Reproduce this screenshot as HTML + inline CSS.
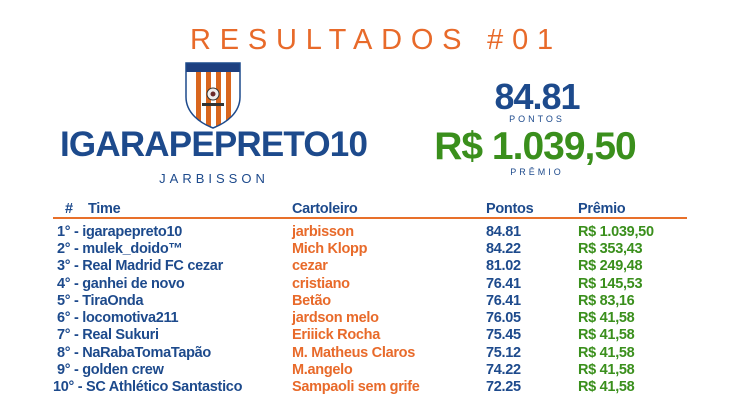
<!DOCTYPE html>
<html><head><meta charset="utf-8"><style>
body{margin:0;width:740px;height:420px;background:#fff;position:relative;overflow:hidden;font-family:"Liberation Sans",sans-serif}
.a{position:absolute;white-space:nowrap}
.b{color:#1d4a8c}.o{color:#e86a2a}.g{color:#3a8f1c}
.row{position:absolute;left:0;width:740px;height:17px;font-weight:bold;font-size:14.5px;letter-spacing:-0.3px}
.row span{position:absolute;top:0}
</style></head><body>
<div class="a o" style="left:6px;width:740px;text-align:center;top:24px;font-size:29px;letter-spacing:8.8px">RESULTADOS #01</div>
<svg class="a" style="left:184px;top:61px" width="58" height="68" viewBox="0 0 58 68">
<defs><clipPath id="c"><path d="M2 2H56V36C56 52 42 62 29 67C16 62 2 52 2 36Z"/></clipPath></defs>
<g clip-path="url(#c)"><rect width="58" height="68" fill="#fff"/>
<rect x="12" y="10" width="5" height="60" fill="#d9661e"/><rect x="22" y="10" width="5" height="60" fill="#d9661e"/><rect x="32" y="10" width="5" height="60" fill="#d9661e"/><rect x="42" y="10" width="5" height="60" fill="#d9661e"/>
<rect width="58" height="11" fill="#1d3f7f"/></g>
<path d="M2 2H56V36C56 52 42 62 29 67C16 62 2 52 2 36Z" fill="none" stroke="#1d4a8c" stroke-width="1.5"/>
<circle cx="29" cy="33" r="6" fill="#eee" stroke="#333"/><circle cx="29" cy="33" r="2.5" fill="#6b2a2a"/>
<rect x="18" y="42" width="22" height="3" fill="#333"/>
</svg>
<div class="a b" style="left:60px;top:125px;font-size:35px;font-weight:bold;letter-spacing:-0.8px">IGARAPEPRETO10</div>
<div class="a b" style="left:60px;width:308px;text-align:center;top:171px;font-size:13px;letter-spacing:4px">JARBISSON</div>
<div class="a b" style="left:432px;width:210px;text-align:center;top:76px;font-size:36px;font-weight:bold;letter-spacing:-1px">84.81</div>
<div class="a b" style="left:432px;width:210px;text-align:center;top:114px;font-size:9px;letter-spacing:3px">PONTOS</div>
<div class="a g" style="left:428px;width:214px;text-align:center;top:125px;font-size:39px;font-weight:bold;letter-spacing:-1px">R$ 1.039,50</div>
<div class="a b" style="left:432px;width:210px;text-align:center;top:167px;font-size:9px;letter-spacing:3px">PRÊMIO</div>
<div class="row b" style="top:201px"><span style="left:65px">#</span><span style="left:88px">Time</span><span style="left:292px">Cartoleiro</span><span style="left:486px">Pontos</span><span style="left:578px">Prêmio</span></div>
<div class="a" style="left:53px;top:217px;width:634px;height:2px;background:#e8702a"></div>
<div class="row" style="top:224px"><span class="b" style="left:57px">1° - igarapepreto10</span><span class="o" style="left:292px">jarbisson</span><span class="b" style="left:486px">84.81</span><span class="g" style="left:578px">R$ 1.039,50</span></div>
<div class="row" style="top:241px"><span class="b" style="left:57px">2° - mulek_doido™</span><span class="o" style="left:292px">Mich Klopp</span><span class="b" style="left:486px">84.22</span><span class="g" style="left:578px">R$ 353,43</span></div>
<div class="row" style="top:258px"><span class="b" style="left:57px">3° - Real Madrid FC cezar</span><span class="o" style="left:292px">cezar</span><span class="b" style="left:486px">81.02</span><span class="g" style="left:578px">R$ 249,48</span></div>
<div class="row" style="top:276px"><span class="b" style="left:57px">4° - ganhei de novo</span><span class="o" style="left:292px">cristiano</span><span class="b" style="left:486px">76.41</span><span class="g" style="left:578px">R$ 145,53</span></div>
<div class="row" style="top:293px"><span class="b" style="left:57px">5° - TiraOnda</span><span class="o" style="left:292px">Betão</span><span class="b" style="left:486px">76.41</span><span class="g" style="left:578px">R$ 83,16</span></div>
<div class="row" style="top:310px"><span class="b" style="left:57px">6° - locomotiva211</span><span class="o" style="left:292px">jardson melo</span><span class="b" style="left:486px">76.05</span><span class="g" style="left:578px">R$ 41,58</span></div>
<div class="row" style="top:327px"><span class="b" style="left:57px">7° - Real Sukuri</span><span class="o" style="left:292px">Eriiick Rocha</span><span class="b" style="left:486px">75.45</span><span class="g" style="left:578px">R$ 41,58</span></div>
<div class="row" style="top:345px"><span class="b" style="left:57px">8° - NaRabaTomaTapão</span><span class="o" style="left:292px">M. Matheus Claros</span><span class="b" style="left:486px">75.12</span><span class="g" style="left:578px">R$ 41,58</span></div>
<div class="row" style="top:362px"><span class="b" style="left:57px">9° - golden crew</span><span class="o" style="left:292px">M.angelo</span><span class="b" style="left:486px">74.22</span><span class="g" style="left:578px">R$ 41,58</span></div>
<div class="row" style="top:379px"><span class="b" style="left:53px">10° - SC Athlético Santastico</span><span class="o" style="left:292px">Sampaoli sem grife</span><span class="b" style="left:486px">72.25</span><span class="g" style="left:578px">R$ 41,58</span></div>
</body></html>
